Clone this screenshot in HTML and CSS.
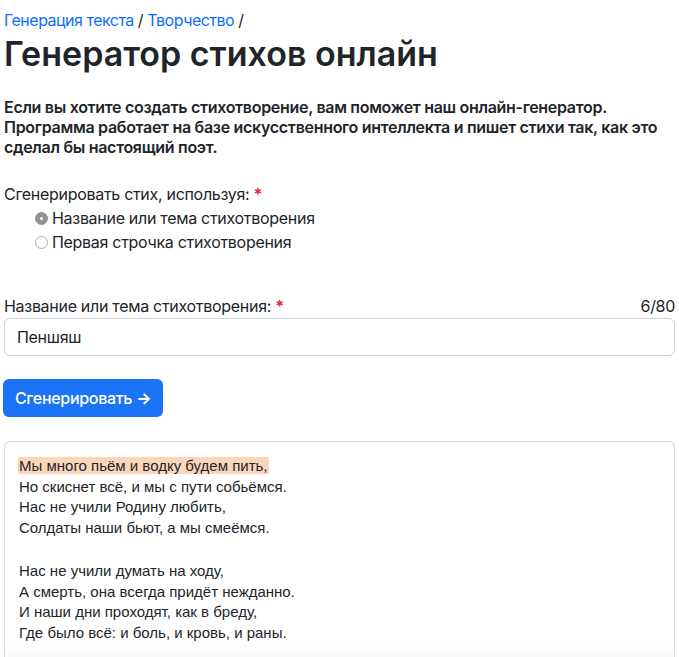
FILE: index.html
```html
<!DOCTYPE html>
<html lang="ru">
<head>
<meta charset="utf-8">
<title>Генератор стихов онлайн</title>
<link rel="stylesheet" href="styles.css">
</head>
<body>
<main class="page">
  <nav class="crumbs"><a href="#">Генерация текста</a> / <a href="#">Творчество</a> /</nav>
  <h1 class="title">Генератор стихов онлайн</h1>
  <p class="lead">Если вы хотите создать стихотворение, вам поможет наш онлайн-генератор. Программа работает на базе искусственного интеллекта и пишет стихи так, как это сделал бы настоящий поэт.</p>

  <div class="field">
    <div class="label">Сгенерировать стих, используя: <span class="req">*</span></div>
    <div class="options">
      <label class="opt"><span class="radio checked"></span>Название или тема стихотворения</label>
      <label class="opt"><span class="radio"></span>Первая строчка стихотворения</label>
    </div>
  </div>

  <div class="field topic">
    <div class="label-row"><span>Название или тема стихотворения: <span class="req">*</span></span><span>6/80</span></div>
    <div class="input">Пеншяш</div>
  </div>

  <button class="btn">Сгенерировать <span class="arrow">→</span></button>

  <div class="result">
    <p class="stanza"><span class="hl">Мы много пьём и водку будем пить,</span><br>Но скиснет всё, и мы с пути собьёмся.<br>Нас не учили Родину любить,<br>Солдаты наши бьют, а мы смеёмся.</p>
    <p class="stanza">Нас не учили думать на ходу,<br>А смерть, она всегда придёт нежданно.<br>И наши дни проходят, как в бреду,<br>Где было всё: и боль, и кровь, и раны.</p>
    <div class="fade"></div>
  </div>
</main>
</body>
</html>
```

FILE: styles.css
```css
html, body {
  margin: 0;
  padding: 0;
  background: #fff;
}
body {
  font-family: Inter, "Liberation Sans", Arial, sans-serif;
  color: #212529;
  font-size: 16px;
  line-height: 24px;
  letter-spacing: -0.3px;
}
.page {
  padding: 8px 4px 0 4px;
}
.crumbs {
  color: #212529;
  letter-spacing: -0.5px;
}
.crumbs a {
  color: #0d6efd;
  text-decoration: none;
}
.title {
  font-size: 34px;
  font-weight: 600;
  line-height: 40px;
  margin: 2px 0 0 0;
  letter-spacing: 0;
}
.lead {
  font-size: 16px;
  font-weight: 600;
  line-height: 20px;
  margin: 23px 0 0 0;
  letter-spacing: -0.3px;
}
.field {
  margin-top: 25px;
}
.label {
  line-height: 24px;
}
.req {
  color: #e8202e;
  font-weight: 700;
}
.options {
  padding-left: 31px;
}
.opt {
  display: flex;
  align-items: center;
  gap: 4px;
  line-height: 24px;
}
.radio {
  width: 13px;
  height: 13px;
  border-radius: 50%;
  border: 1px solid #b0b0b0;
  background: #fff;
  box-sizing: border-box;
  position: relative;
  flex: none;
}
.radio.checked {
  background: #929292;
  border-color: #929292;
}
.radio.checked::after {
  content: "";
  position: absolute;
  left: 4px;
  top: 4px;
  width: 3px;
  height: 3px;
  border-radius: 50%;
  background: #fff;
}
.topic {
  margin-top: 40px;
}
.label-row {
  display: flex;
  justify-content: space-between;
  line-height: 24px;
}
.input {
  margin-top: 0;
  height: 38px;
  box-sizing: border-box;
  border: 1px solid #ced4da;
  border-radius: 6px;
  padding: 6px 12px;
  line-height: 24px;
}
.btn {
  margin-top: 23px;
  margin-left: -1px;
  height: 38px;
  width: 160px;
  background: #1b74f5;
  color: #fff;
  border: none;
  border-radius: 6px;
  font-family: inherit;
  font-size: 16px;
  font-weight: 500;
  letter-spacing: -0.3px;
  white-space: nowrap;
  display: block;
  padding: 0;
  text-align: center;
}
.arrow {
  font-weight: 700;
}
.result {
  margin-top: 24px;
  border: 1px solid #dcdcdf;
  border-bottom: none;
  border-radius: 6px 6px 0 0;
  padding: 14px 14px 0 14px;
  height: 216px;
  position: relative;
  overflow: hidden;
  font-family: "Liberation Sans", Arial, sans-serif;
  font-size: 15px;
  line-height: 20.7px;
  letter-spacing: 0;
}
.stanza {
  margin: 0 0 22px 0;
}
.hl {
  background: #fcd6bb;
  padding: 0 1px;
  margin-left: -1px;
}
.fade {
  position: absolute;
  left: 0;
  right: 0;
  bottom: 0;
  height: 30px;
  background: linear-gradient(to bottom, rgba(245,245,245,0), #f3f3f3);
}
```
